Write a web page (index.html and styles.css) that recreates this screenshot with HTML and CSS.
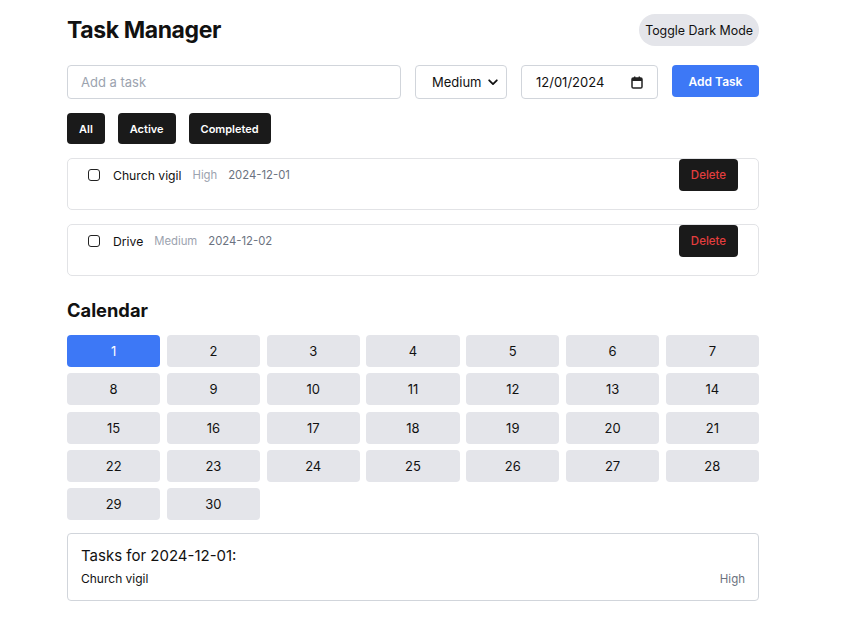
FILE: index.html
```html
<!DOCTYPE html>
<html lang="en">
<head>
<meta charset="utf-8">
<title>Task Manager</title>
<link rel="stylesheet" href="styles.css">
</head>
<body>
<div class="app">
  <header class="header">
    <h1 class="title">Task Manager</h1>
    <button class="toggle">Toggle Dark Mode</button>
  </header>

  <div class="add-row">
    <input class="task-input" type="text" placeholder="Add a task">
    <div class="select-wrap">
      <span class="select-value">Medium</span>
      <svg class="chev" width="10" height="7" viewBox="0 0 10 7"><path d="M1.2 1.3 5 5.1 8.8 1.3" fill="none" stroke="#111" stroke-width="1.8" stroke-linecap="round" stroke-linejoin="round"/></svg>
    </div>
    <div class="date-wrap">
      <span class="date-value">12/01/2024</span>
      <svg class="cal-icon" width="12" height="13" viewBox="0 0 12 13"><rect x="1" y="2" width="10" height="10" rx="1.3" fill="none" stroke="#222" stroke-width="1.5"/><rect x="1" y="2" width="10" height="3" fill="#222"/><rect x="3" y="0.5" width="1.4" height="2.5" fill="#222"/><rect x="7.6" y="0.5" width="1.4" height="2.5" fill="#222"/></svg>
    </div>
    <button class="add-btn">Add Task</button>
  </div>

  <div class="filters">
    <button class="filter">All</button>
    <button class="filter">Active</button>
    <button class="filter">Completed</button>
  </div>

  <ul class="tasks">
    <li class="task">
      <div class="task-main">
        <span class="check"></span>
        <span class="task-name">Church vigil</span>
        <span class="task-priority">High</span>
        <span class="task-date">2024-12-01</span>
      </div>
      <button class="delete">Delete</button>
    </li>
    <li class="task">
      <div class="task-main">
        <span class="check"></span>
        <span class="task-name">Drive</span>
        <span class="task-priority">Medium</span>
        <span class="task-date">2024-12-02</span>
      </div>
      <button class="delete">Delete</button>
    </li>
  </ul>

  <h2 class="cal-title">Calendar</h2>
  <div class="calendar">
    <div class="day selected">1</div><div class="day">2</div><div class="day">3</div><div class="day">4</div><div class="day">5</div><div class="day">6</div><div class="day">7</div>
    <div class="day">8</div><div class="day">9</div><div class="day">10</div><div class="day">11</div><div class="day">12</div><div class="day">13</div><div class="day">14</div>
    <div class="day">15</div><div class="day">16</div><div class="day">17</div><div class="day">18</div><div class="day">19</div><div class="day">20</div><div class="day">21</div>
    <div class="day">22</div><div class="day">23</div><div class="day">24</div><div class="day">25</div><div class="day">26</div><div class="day">27</div><div class="day">28</div>
    <div class="day">29</div><div class="day">30</div>
  </div>

  <section class="day-tasks">
    <h3 class="day-tasks-title">Tasks for 2024-12-01:</h3>
    <div class="day-task">
      <span>Church vigil</span>
      <span class="day-task-priority">High</span>
    </div>
  </section>
</div>
</body>
</html>
```

FILE: styles.css
```css
* { box-sizing: border-box; }
html, body { margin: 0; padding: 0; background: #fff; }
body {
  font-family: Inter, "Noto Sans", "Liberation Sans", sans-serif;
  color: #111;
}
.app {
  width: 692px;
  margin-left: 67px;
  padding-top: 14px;
}
.header {
  display: flex;
  justify-content: space-between;
  align-items: center;
  height: 32px;
}
.title {
  margin: 0;
  font-size: 23px;
  font-weight: 700;
  letter-spacing: -0.4px;
  line-height: 32px;
}
.toggle {
  height: 32px;
  padding: 0 6px;
  border: none;
  border-radius: 16px;
  background: #e4e5ea;
  font-family: inherit;
  font-size: 12.4px;
  color: #111;
}
.add-row {
  display: flex;
  align-items: flex-start;
  gap: 14px;
  margin-top: 19px;
}
.task-input {
  width: 334px;
  height: 34px;
  padding: 0 13px;
  border: 1px solid #d1d5db;
  border-radius: 4px;
  font-family: inherit;
  font-size: 13px;
  outline: none;
}
.task-input::placeholder { color: #9ca3af; }
.select-wrap, .date-wrap {
  height: 34px;
  border: 1px solid #d1d5db;
  border-radius: 4px;
  display: flex;
  align-items: center;
  font-size: 13px;
}
.select-wrap {
  width: 92px;
  padding: 0 8px 0 16px;
  justify-content: space-between;
}
.date-wrap {
  width: 137px;
  padding: 0 14px 0 14px;
  justify-content: space-between;
}
.add-btn {
  width: 87px;
  height: 32px;
  border: none;
  border-radius: 4px;
  background: #3d78f6;
  color: #fff;
  font-family: inherit;
  font-size: 12px;
  font-weight: 600;
}
.filters {
  display: flex;
  gap: 13px;
  margin-top: 14px;
}
.filter {
  height: 31px;
  padding: 0 12px;
  border: none;
  border-radius: 4px;
  background: #1a1a1a;
  color: #fff;
  font-family: inherit;
  font-size: 11px;
  font-weight: 600;
}
.tasks {
  list-style: none;
  margin: 14px 0 0;
  padding: 0;
  display: flex;
  flex-direction: column;
  gap: 14px;
}
.task {
  height: 52px;
  border: 1px solid #e2e3e6;
  border-radius: 5px;
  padding: 0 20px;
  display: flex;
  justify-content: space-between;
  align-items: flex-start;
}
.task-main {
  display: flex;
  align-items: center;
  height: 32px;
  font-size: 12.2px;
}
.check {
  width: 12px;
  height: 12px;
  border: 1px solid #222;
  border-radius: 3px;
  margin-right: 13px;
}
.task-name { margin-right: 11px; }
.task-priority { color: #9ca3af; font-size: 11.3px; margin-right: 11px; }
.task-date { color: #6b7280; font-size: 11.3px; }
.delete {
  width: 59px;
  height: 32px;
  border: none;
  border-radius: 4px;
  background: #1a1a1a;
  color: #e53e3e;
  font-family: inherit;
  font-size: 11.5px;
  font-weight: 500;
}
.cal-title {
  margin: 20px 0 11px;
  font-size: 18.3px;
  font-weight: 700;
  line-height: 28px;
}
.calendar {
  display: grid;
  grid-template-columns: repeat(7, 1fr);
  column-gap: 6.5px;
  row-gap: 6.3px;
}
.day {
  height: 32px;
  border-radius: 4px;
  background: #e4e5ea;
  display: flex;
  align-items: center;
  justify-content: center;
  font-size: 13px;
}
.day.selected { background: #3d78f6; color: #fff; }
.day-tasks {
  margin-top: 13px;
  border: 1px solid #d1d5db;
  border-radius: 4px;
  padding: 10px 13px 13px;
}
.day-tasks-title {
  margin: 0 0 3px;
  font-size: 15px;
  font-weight: 400;
  line-height: 24px;
}
.day-task {
  display: flex;
  justify-content: space-between;
  font-size: 12px;
  line-height: 16px;
}
.day-task-priority { color: #6b7280; font-size: 11.5px; }
```
